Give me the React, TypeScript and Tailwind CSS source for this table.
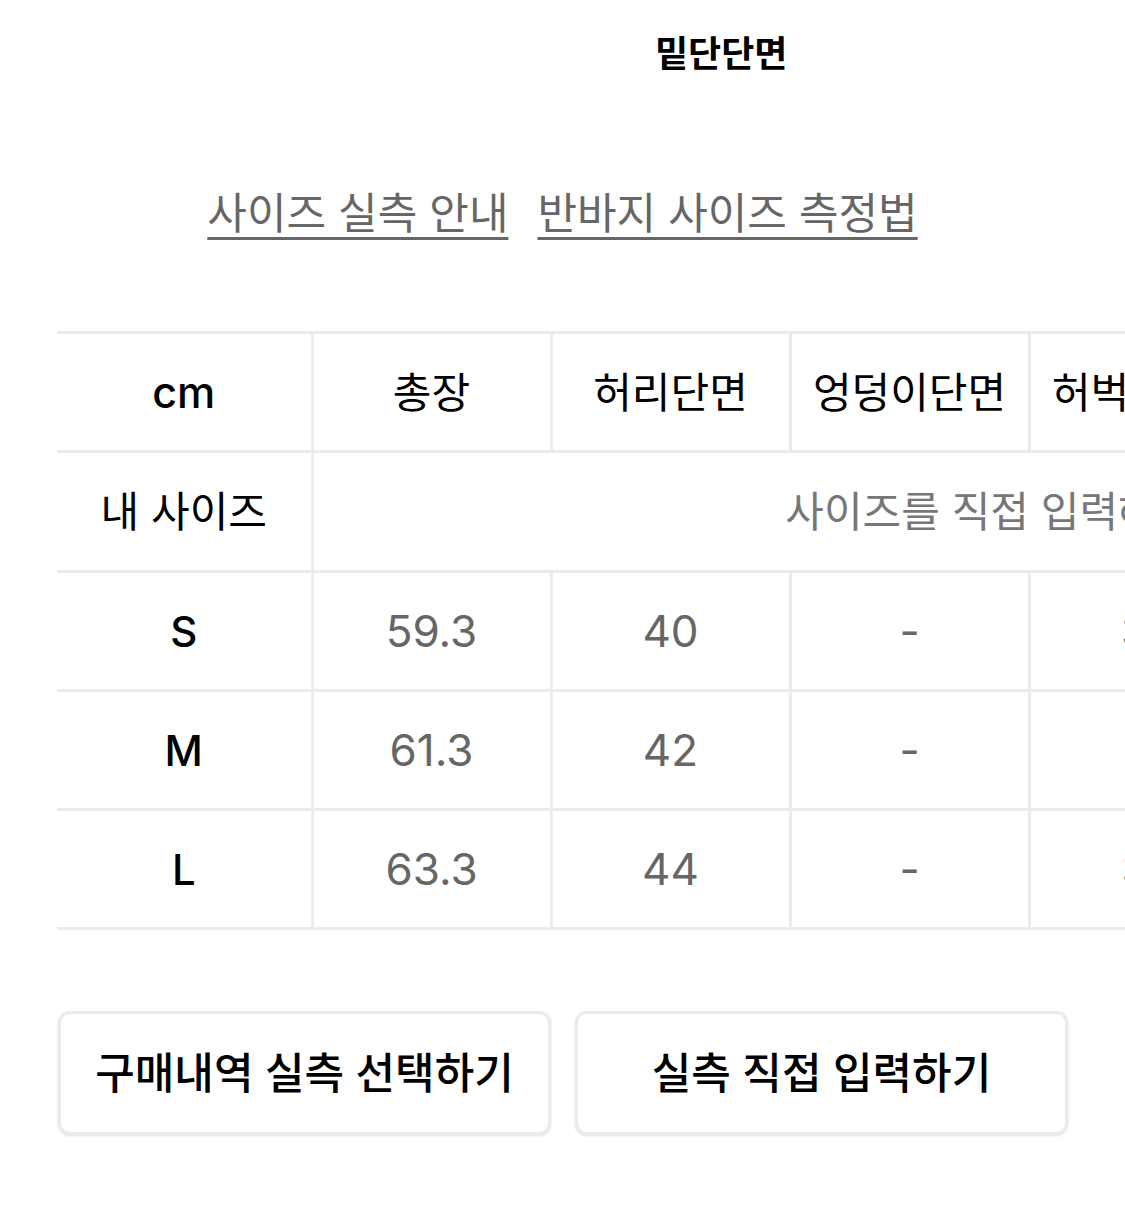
import React from "react";

const font = { fontFamily: 'Inter, "Noto Sans CJK KR", sans-serif' };

const cols = ["총장", "허리단면", "엉덩이단면", "허벅지단면", "밑위", "밑단단면"];
const rows: { size: string; vals: string[] }[] = [
  { size: "S", vals: ["59.3", "40", "-", "30", "27", "21"] },
  { size: "M", vals: ["61.3", "42", "-", "31", "28", "22"] },
  { size: "L", vals: ["63.3", "44", "-", "32", "29", "23"] },
];

export default function App() {
  return (
    <div
      className="w-[1125px] h-[1206px] overflow-hidden bg-white flex flex-col"
      style={font}
    >
      <div className="pt-[32px] pl-[655px] text-[36px] leading-[44px] font-bold text-black whitespace-nowrap">
        밑단단면
      </div>

      <div className="mt-[112px] flex justify-center gap-[29px] text-[43px] leading-[50px] text-[#666666]">
        <span className="underline decoration-[3px] underline-offset-[8px] decoration-[#666666]">
          사이즈 실측 안내
        </span>
        <span className="underline decoration-[3px] underline-offset-[8px] decoration-[#666666]">
          반바지 사이즈 측정법
        </span>
      </div>

      <div className="mt-[93px] pl-[57px]">
        <table className="border-collapse table-fixed w-[1688px]">
          <colgroup>
            <col className="w-[255px]" />
            {cols.map((c) => (
              <col key={c} className="w-[239px]" />
            ))}
          </colgroup>
          <tbody>
            <tr className="h-[119px]">
              <td className="border-y-[3px] border-r-[3px] border-[#ebebeb] text-center text-[43px] font-medium text-black">
                cm
              </td>
              {cols.map((c) => (
                <td
                  key={c}
                  className="border-[3px] border-[#ebebeb] text-center text-[42px] text-black whitespace-nowrap"
                >
                  {c}
                </td>
              ))}
            </tr>
            <tr className="h-[120px]">
              <td className="border-y-[3px] border-r-[3px] border-[#ebebeb] text-center text-[42px] text-black whitespace-nowrap">
                내 사이즈
              </td>
              <td
                colSpan={6}
                className="border-[3px] border-[#ebebeb] text-center text-[42px] text-[#777777] whitespace-nowrap"
              >
                사이즈를 직접 입력해주세요
              </td>
            </tr>
            {rows.map((r) => (
              <tr key={r.size} className="h-[119px]">
                <td className="border-y-[3px] border-r-[3px] border-[#ebebeb] text-center text-[42px] font-medium text-black">
                  {r.size}
                </td>
                {r.vals.map((v, i) => (
                  <td
                    key={i}
                    className="border-[3px] border-[#ebebeb] text-center text-[44px] text-[#666666]"
                  >
                    {v}
                  </td>
                ))}
              </tr>
            ))}
          </tbody>
        </table>
      </div>

      <div className="mt-[81px] pl-[58px] flex gap-[24px]">
        <button className="w-[493px] h-[124px] rounded-[12px] border-[3px] border-[#ebebeb] shadow-sm bg-white text-[43px] font-medium text-black flex items-center justify-center whitespace-nowrap">
          구매내역 실측 선택하기
        </button>
        <button className="w-[493px] h-[124px] rounded-[12px] border-[3px] border-[#ebebeb] shadow-sm bg-white text-[43px] font-medium text-black flex items-center justify-center whitespace-nowrap">
          실측 직접 입력하기
        </button>
      </div>
    </div>
  );
}
